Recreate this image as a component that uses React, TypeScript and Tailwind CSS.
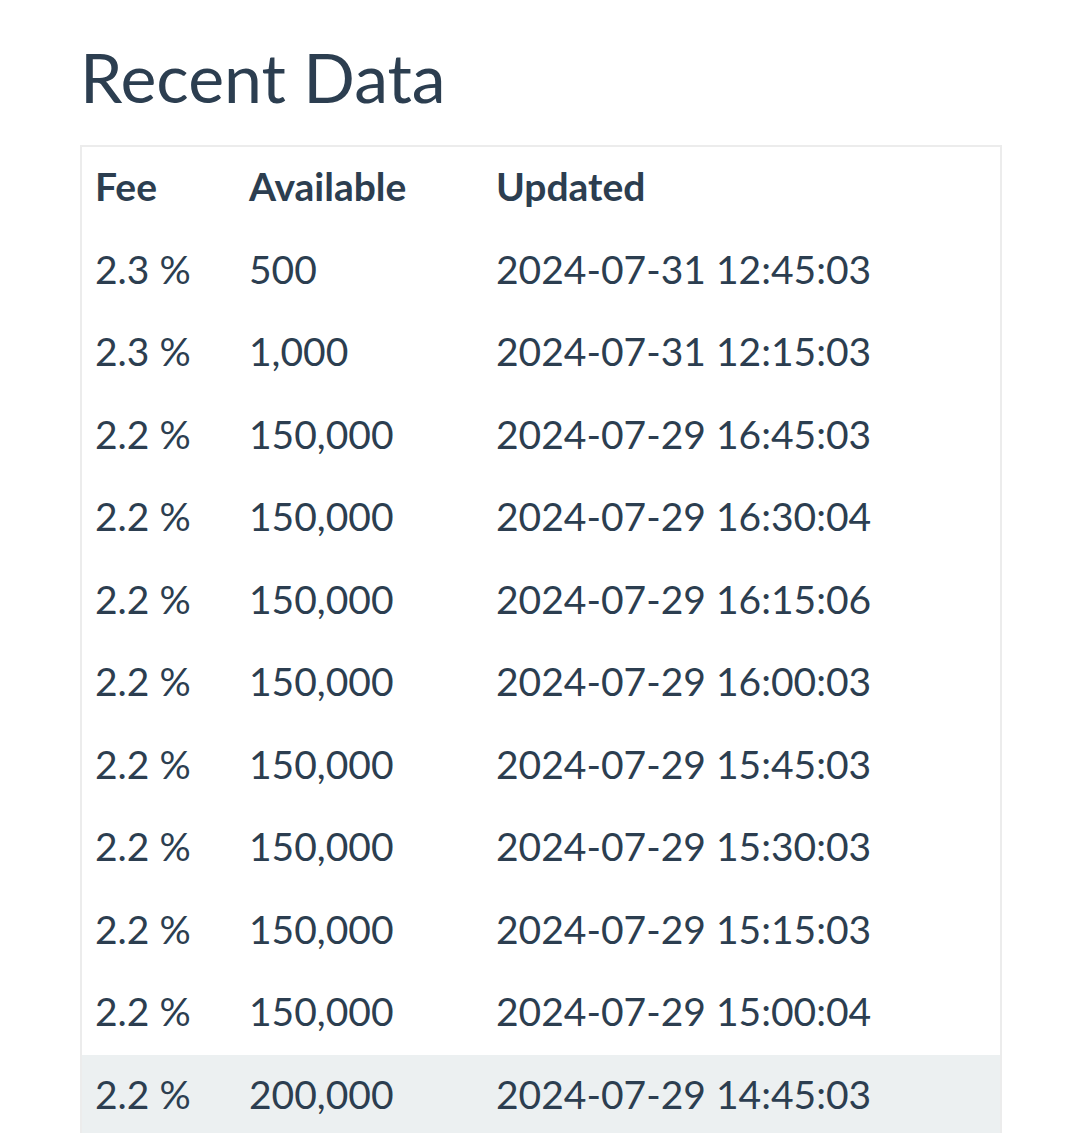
const ROWS: [string, string, string][] = [
  ["2.3 %", "500", "2024-07-31 12:45:03"],
  ["2.3 %", "1,000", "2024-07-31 12:15:03"],
  ["2.2 %", "150,000", "2024-07-29 16:45:03"],
  ["2.2 %", "150,000", "2024-07-29 16:30:04"],
  ["2.2 %", "150,000", "2024-07-29 16:15:06"],
  ["2.2 %", "150,000", "2024-07-29 16:00:03"],
  ["2.2 %", "150,000", "2024-07-29 15:45:03"],
  ["2.2 %", "150,000", "2024-07-29 15:30:03"],
  ["2.2 %", "150,000", "2024-07-29 15:15:03"],
  ["2.2 %", "150,000", "2024-07-29 15:00:04"],
  ["2.2 %", "200,000", "2024-07-29 14:45:03"],
];

export default function App() {
  return (
    <div className="h-[1133px] overflow-hidden bg-white px-[80px] pt-[43px] text-[#2c3e50] font-['Lato',sans-serif]">
      <h1 className="text-[68px] leading-none font-normal">Recent Data</h1>
      <div className="mt-[34px] w-[922px] border-2 border-[#ececec]">
        <table className="w-full border-collapse text-left text-[39px] [&_td]:pb-[4px] [&_th]:pb-[4px]">
          <thead>
            <tr className="h-[82.5px]">
              <th className="w-[167px] pl-[13px] font-bold">Fee</th>
              <th className="w-[247px] font-bold">Available</th>
              <th className="font-bold">Updated</th>
            </tr>
          </thead>
          <tbody>
            {ROWS.map((r, i) => (
              <tr key={i} className={`h-[82.5px] ${i === ROWS.length - 1 ? "bg-[#ecf0f1]" : ""}`}>
                <td className="pl-[13px]">{r[0]}</td>
                <td>{r[1]}</td>
                <td>{r[2]}</td>
              </tr>
            ))}
          </tbody>
        </table>
      </div>
    </div>
  );
}
